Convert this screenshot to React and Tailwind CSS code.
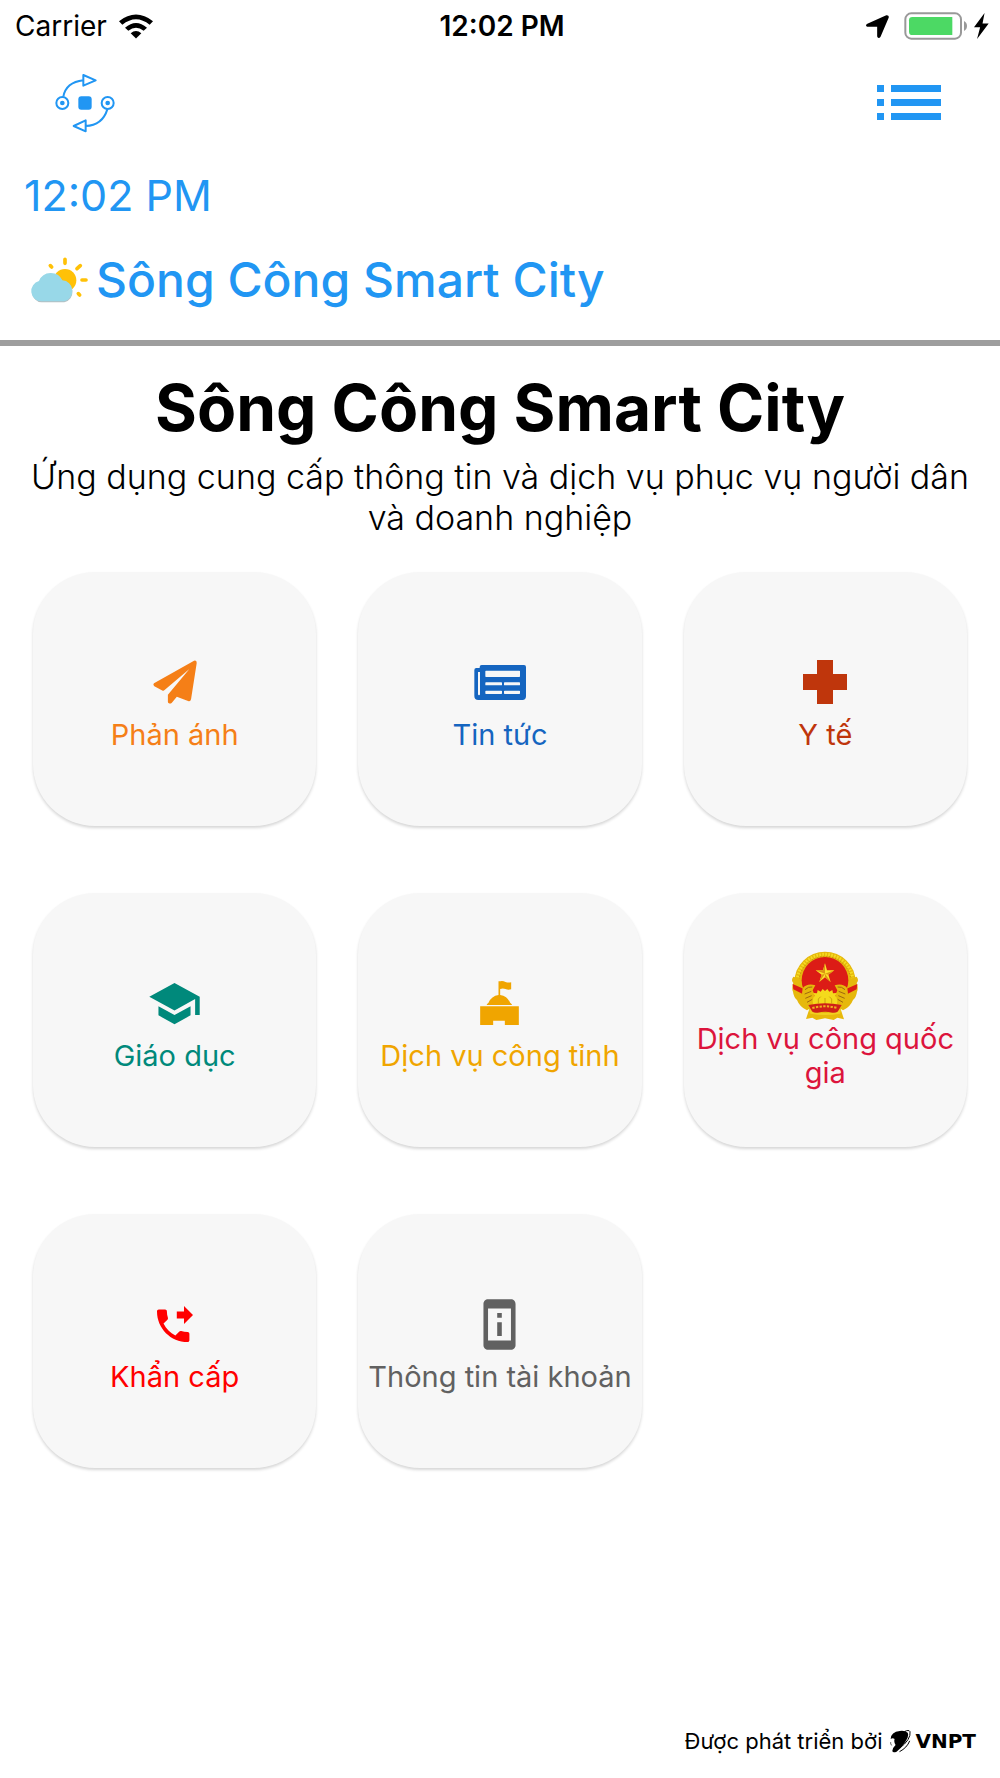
import React from "react";
import { MdSchool, MdPermDeviceInformation } from "react-icons/md";

function WifiIcon() {
  return (
    <svg width="34" height="25" viewBox="0 0 102 74" aria-hidden="true">
      <path d="M0 21Q51-19 102 21L92 32Q51-1 10 32Z" />
      <path d="M18 41Q51 12 84 41L74 50Q51 31 28 50Z" />
      <path d="M35 57Q51 44 67 57L51 73Z" />
    </svg>
  );
}

function LocationIcon() {
  return (
    <svg width="23" height="23" viewBox="0 0 68 68" aria-hidden="true">
      <path d="M60 1Q69 0 67 8L43 64Q41 68 37 68Q33 67 33 63V35H4Q0 34 0 31Q0 28 4 26Z" />
    </svg>
  );
}

function BatteryIcon() {
  return (
    <svg width="64" height="28" viewBox="0 0 192 84" aria-hidden="true">
      <rect x="4" y="4" width="167" height="76" rx="18" fill="none" stroke="#999" strokeWidth="6" />
      <path d="M25 15H145V69H25Q15 69 15 59V25Q15 15 25 15Z" fill="#4cd964" />
      <path d="M180 27Q189 32 189 42Q189 52 180 57Z" fill="#999" />
    </svg>
  );
}

function BoltIcon() {
  return (
    <svg width="15" height="26" viewBox="0 0 44 76" aria-hidden="true">
      <path d="M31 0L0 42H18L9 76L43 31H25Z" />
    </svg>
  );
}

function RouteIcon() {
  return (
    <svg width="60" height="60" viewBox="0 0 180 180" fill="none" stroke="#2196f3" strokeWidth="6" aria-hidden="true">
      <path d="M25 71Q33 28 85 22M85 6V38L122 22Z" strokeLinejoin="round" />
      <path d="M157 109Q142 157 92 159M92 142V175L56 159Z" strokeLinejoin="round" />
      <circle cx="22" cy="90" r="18" />
      <circle cx="158" cy="90" r="18" />
      <g fill="#2196f3" stroke="none">
        <circle cx="22" cy="90" r="7" />
        <circle cx="158" cy="90" r="7" />
        <rect x="70" y="70" width="40" height="40" rx="9" />
      </g>
    </svg>
  );
}

function ListIcon() {
  return (
    <svg width="64" height="36" viewBox="0 0 64 36" fill="#2196f3" aria-hidden="true">
      <path d="M0 0H7V7H0ZM14 0H64V7H14ZM0 14H7V21H0ZM14 14H64V21H14ZM0 28H7V35H0ZM14 28H64V35H14Z" />
    </svg>
  );
}

function WeatherIcon() {
  return (
    <svg width="58" height="46" viewBox="0 0 174 138" aria-hidden="true">
      <g stroke="#ffc107" strokeWidth="11" strokeLinecap="round">
        <path d="M105 7V19M151 26L141 35M156 69H168M145 110L149 114M61 26L65 30" />
      </g>
      <circle cx="105" cy="70" r="34" fill="#ffc107" />
      <path d="M34 136A31 31 0 0 1 27 76A38 38 0 0 1 97 73A32 32 0 0 1 103 136Z" fill="#b5bfc2" />
      <path d="M34 133A31 31 0 0 1 27 72A38 38 0 0 1 97 70A32 32 0 0 1 103 133Z" fill="#98d8e8" />
    </svg>
  );
}

function PlaneIcon() {
  return (
    <svg width="44" height="44" viewBox="68 60 133 133" fill="currentColor" aria-hidden="true">
      <path d="M192 62Q201 60 200 70L183 179Q181 187 174 184L140 171L125 189Q121 193 116 191Q113 190 113 186V165L178 87L103 151Q100 154 96 152L72 139Q67 135 71 130Z" />
    </svg>
  );
}

function NewsIcon() {
  return (
    <svg width="52" height="35" viewBox="102 75 156 105" aria-hidden="true">
      <path
        fill="currentColor"
        fillRule="evenodd"
        d="M125 75H252Q258 75 258 81V169Q258 180 247 180H115Q103 180 103 168V90Q103 84 109 84H119V81Q119 75 125 75ZM114 96V162Q114 166 117 166Q120 166 120 162V96ZM138 92Q136 92 136 94V109Q136 111 138 111H238Q240 111 240 109V94Q240 92 238 92ZM138 127Q136 127 136 129V134Q136 136 138 136H184Q186 136 186 134V129Q186 127 184 127ZM194 127Q192 127 192 129V134Q192 136 194 136H238Q240 136 240 134V129Q240 127 238 127ZM138 152Q136 152 136 154V160Q136 162 138 162H184Q186 162 186 160V154Q186 152 184 152ZM194 152Q192 152 192 154V160Q192 162 194 162H238Q240 162 240 160V154Q240 152 238 152Z"
      />
    </svg>
  );
}

function CrossIcon() {
  return (
    <svg width="44" height="44" viewBox="0 0 44 44" fill="currentColor" aria-hidden="true">
      <path d="M14 0H30V14H44V30H30V44H14V30H0V14H14Z" />
    </svg>
  );
}

function CapitolIcon() {
  return (
    <svg width="39" height="44" viewBox="122 65 116 132" fill="currentColor" aria-hidden="true">
      <path d="M177 66H182Q190 64 198 68Q206 71 215 69V90Q206 93 198 89Q190 86 182 89V107Q203 110 212 130L217 135V137H142V135L147 130Q156 110 177 107Z" />
      <path d="M122 141H238V197H196V184H161V197H122Z" />
    </svg>
  );
}

function PhoneForwardIcon() {
  return (
    <svg width="36" height="36" viewBox="3 1 20 20" fill="currentColor" aria-hidden="true">
      <path d="M18 11l5-5-5-5v3h-4v4h4v3zm2 4.500c-1.250 0-2.450-.2-3.570-.570-.350-.110-.740-.030-1.020.240l-2.200 2.200c-2.830-1.440-5.150-3.750-6.590-6.590l2.200-2.210c.280-.260.360-.650.250-1C8.700 6.450 8.500 5.250 8.500 4c0-.550-.450-1-1-1H4c-.550 0-1 .450-1 1 0 9.390 7.610 17 17 17 .550 0 1-.450 1-1v-3.500c0-.550-.450-1-1-1z" />
    </svg>
  );
}

function EmblemIcon() {
  return (
    <svg width="70" height="70" viewBox="61 64 210 210" aria-hidden="true">
      <path d="M121 232L109 268L128 264L140 271L166 266L192 271L203 264L223 269L211 232Z" fill="#e8b90c" />
      <path d="M118 238L214 238L211 252Q166 260 122 252Z" fill="#f0d020" />
      <circle cx="166" cy="158" r="92" fill="#e6b80c" />
      <circle cx="166" cy="158" r="84" fill="none" stroke="#f6dc22" strokeWidth="9" strokeDasharray="5 4" />
      <circle cx="166" cy="158" r="78" fill="none" stroke="#b98910" strokeWidth="3" strokeDasharray="3 6" />
      <path d="M71 141Q63 151 71 160Q65 174 70 186Q72 202 82 211Q90 232 112 242L132 230L100 150ZM261 141Q269 151 261 160Q267 174 262 186Q260 202 250 211Q242 232 220 242L200 230L232 150Z" fill="#e6b80c" />
      <circle cx="166" cy="152" r="70" fill="#dc1c16" />
      <path d="M69 163L103 178L99 193L71 179ZM263 163L229 178L233 193L261 179Z" fill="#dc1c16" />
      <path d="M99 176Q112 160 137 167L129 182L135 196L128 224L109 225Q93 202 99 176ZM233 176Q220 160 195 167L203 182L197 196L204 224L223 225Q239 202 233 176Z" fill="#e6b80c" />
      <path d="M106 180Q116 170 128 172M105 193L125 185M107 206L126 198M112 218L128 209M226 180Q216 170 204 172M227 193L207 185M225 206L206 198M220 218L204 209" stroke="#9f6810" strokeWidth="3" fill="none" />
      <path d="M131 226Q126 207 135 198L131 190L142 191L144 181L153 186L159 178L166 184L173 178L179 186L188 181L190 191L201 190L197 198Q206 207 201 226Z" fill="#f4da1c" />
      <path d="M146 221V208L153 201M166 224V205M186 221V208L179 201" stroke="#d0a010" strokeWidth="3" fill="none" />
      <path d="M116 226Q166 216 216 226L207 241Q204 251 188 249Q166 243 144 249Q128 251 125 241Z" fill="#cf2018" />
      <path d="M128 235Q166 225 204 235" stroke="#f0b020" strokeWidth="6" strokeDasharray="7 4" fill="none" />
      <path d="M166 101L172 122L194 122L176 135L183 157L166 143L149 157L156 135L138 122L160 122Z" fill="#fbe12a" />
      <path d="M166 101V132L160 122ZM194 122L166 132L176 135ZM183 157L166 132V143ZM149 157L166 132L156 135ZM138 122L166 132L160 122Z" fill="#dc9414" />
    </svg>
  );
}

function VnptMark() {
  return (
    <svg width="21" height="23" viewBox="670 55 64 70" aria-hidden="true">
      <path d="M672 82Q673 61 700 58Q715 56 724 63Q729 76 716 92Q704 110 690 121Q679 126 677 119Q679 108 687 101Q681 92 684 82Q678 78 672 82Z" />
      <path d="M714 60Q727 53 731 60Q733 71 725 84Q715 99 701 109M730 88Q722 109 699 121" fill="none" stroke="#000" strokeWidth="3" />
      <path d="M672 92Q671 97 675 102" fill="none" stroke="#000" strokeWidth="2" />
    </svg>
  );
}

const services = [
  { label: "Phản ánh", color: "text-[#f57f17]", icon: <PlaneIcon /> },
  { label: "Tin tức", color: "text-[#1565c0]", icon: <NewsIcon /> },
  { label: "Y tế", color: "text-[#bf360c]", icon: <CrossIcon /> },
  { label: "Giáo dục", color: "text-[#00897b]", icon: <MdSchool size={55} /> },
  { label: "Dịch vụ công tỉnh", color: "text-[#f0a500]", icon: <CapitolIcon /> },
  { label: "Dịch vụ công quốc gia", color: "text-[#dc143c]", icon: <EmblemIcon /> },
  { label: "Khẩn cấp", color: "text-[#ff0000]", icon: <PhoneForwardIcon /> },
  { label: "Thông tin tài khoản", color: "text-[#616161]", icon: <MdPermDeviceInformation size={55} /> },
];

function ServiceCard({ label, color, icon }) {
  return (
    <button
      type="button"
      className={`flex min-h-[254px] flex-col items-center justify-center rounded-[62px] bg-[#f7f7f7] px-2 text-[29px] leading-[34px] shadow-[0_2px_3px_rgba(0,0,0,0.16)] ${color}`}
    >
      <span className="flex h-[71px] items-center justify-center">{icon}</span>
      <span>{label}</span>
    </button>
  );
}

export default function App() {
  return (
    <div className="flex min-h-screen flex-col bg-white font-['Inter',sans-serif] text-black">
      <div className="grid h-[52px] grid-cols-3 items-center px-[15px] pr-[11px] text-[28px] leading-8">
        <div className="flex items-center gap-3">
          <span>Carrier</span>
          <WifiIcon />
        </div>
        <time className="text-center font-semibold">12:02 PM</time>
        <div className="flex items-center justify-end">
          <span className="mr-[15px]"><LocationIcon /></span>
          <span className="mr-[6px]"><BatteryIcon /></span>
          <BoltIcon />
        </div>
      </div>

      <header className="border-b-[6px] border-[#9e9e9e] pt-[21px] pb-8 text-[#2196f3]">
        <div className="flex h-[60px] items-center justify-between pr-[59px] pl-[55px]">
          <button type="button" aria-label="Sông Công Smart City">
            <RouteIcon />
          </button>
          <button type="button" aria-label="Menu">
            <ListIcon />
          </button>
        </div>
        <p className="mt-[37px] px-6 text-[43px] leading-[50px]">12:02 PM</p>
        <div className="mt-8 flex items-center gap-2 px-[30px]">
          <WeatherIcon />
          <p className="text-[48px] leading-[56px] font-medium">Sông Công Smart City</p>
        </div>
      </header>

      <main className="pt-6">
        <h1 className="text-center text-[64px] leading-[76px] font-bold">Sông Công Smart City</h1>
        <p className="mt-[10px] px-6 text-center text-[34px] leading-[41px] font-light">
          Ứng dụng cung cấp thông tin và dịch vụ phục vụ người dân và doanh nghiệp
        </p>
        <div className="mt-[34px] grid grid-cols-3 gap-x-[42px] gap-y-[67px] px-[33px]">
          {services.map((service) => (
            <ServiceCard key={service.label} {...service} />
          ))}
        </div>
      </main>

      <footer className="mt-auto flex items-center justify-end gap-2 pr-6 pb-[22px] text-[22px] leading-[30px]">
        <span>Được phát triển bởi</span>
        <span className="flex items-center gap-1">
          <VnptMark />
          <span className="font-['DejaVu_Sans',sans-serif] text-[20px] font-bold">VNPT</span>
        </span>
      </footer>
    </div>
  );
}
